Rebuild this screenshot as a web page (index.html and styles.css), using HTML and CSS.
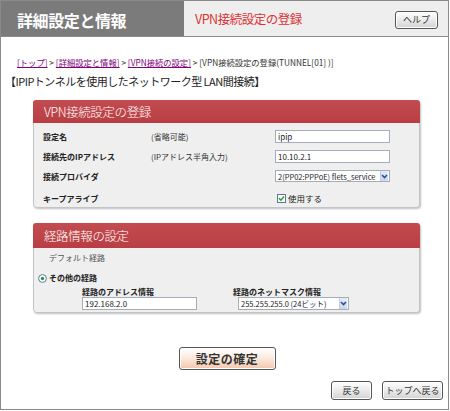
FILE: index.html
```html
<!DOCTYPE html>
<html lang="ja">
<head>
<meta charset="utf-8">
<title>VPN接続設定の登録</title>
<link rel="stylesheet" href="styles.css">
</head>
<body>
<div class="page">
  <header class="top">
    <div class="top-left">詳細設定と情報</div>
    <div class="top-right">
      <span class="page-title">VPN接続設定の登録</span>
      <span class="btn btn-help">ヘルプ</span>
    </div>
  </header>

  <nav class="crumbs">
    <a href="#">[トップ]</a> &gt; <a href="#">[詳細設定と情報]</a> &gt; <a href="#">[VPN接続の設定]</a> &gt; [VPN接続設定の登録(TUNNEL[01] )]
  </nav>

  <h1 class="heading">【IPIPトンネルを使用したネットワーク型 LAN間接続】</h1>

  <section class="panel panel-vpn">
    <div class="panel-head">VPN接続設定の登録</div>
    <div class="panel-body form-grid">
      <div class="lbl">設定名</div>
      <div class="note">(省略可能)</div>
      <div class="ctl"><span class="input w115">ipip</span></div>

      <div class="lbl">接続先のIPアドレス</div>
      <div class="note">(IPアドレス半角入力)</div>
      <div class="ctl"><span class="input w115">10.10.2.1</span></div>

      <div class="lbl">接続プロバイダ</div>
      <div class="note"></div>
      <div class="ctl"><span class="select w115"><span class="sel-text">2(PP02:PPPoE) flets_service</span><span class="sel-arrow"><svg width="7" height="9" viewBox="0 0 7 9"><path d="M1 3 L3.5 5.5 L6 3" fill="none" stroke="#2a4f9a" stroke-width="1.6"/></svg></span></span></div>

      <div class="lbl lbl-last">キープアライブ</div>
      <div class="note lbl-last"></div>
      <div class="ctl lbl-last"><span class="check"><svg width="9" height="9" viewBox="0 0 9 9"><rect x="0.5" y="0.5" width="8" height="8" fill="#fff" stroke="#5a7a9a"/><path d="M2 4.3 L3.8 6.2 L7 2.4" fill="none" stroke="#2e9a2e" stroke-width="1.5"/></svg></span>使用する</div>
    </div>
  </section>

  <section class="panel panel-route">
    <div class="panel-head">経路情報の設定</div>
    <div class="panel-body">
      <div class="default-route">デフォルト経路</div>
      <div class="other-route"><span class="radio"><svg width="9" height="9" viewBox="0 0 9 9"><circle cx="4.5" cy="4.5" r="3.9" fill="#fff" stroke="#5a7a9a"/><circle cx="4.5" cy="4.5" r="1.7" fill="#2e9a2e"/></svg></span>その他の経路</div>
      <div class="route-cols">
        <div class="route-col">
          <div class="lbl">経路のアドレス情報</div>
          <span class="input w115">192.168.2.0</span>
        </div>
        <div class="route-col col2">
          <div class="lbl">経路のネットマスク情報</div>
          <span class="select w111"><span class="sel-text">255.255.255.0 (24ビット)</span><span class="sel-arrow"><svg width="7" height="9" viewBox="0 0 7 9"><path d="M1 3 L3.5 5.5 L6 3" fill="none" stroke="#2a4f9a" stroke-width="1.6"/></svg></span></span>
        </div>
      </div>
    </div>
  </section>

  <div class="confirm-row">
    <span class="btn btn-confirm">設定の確定</span>
  </div>

  <div class="nav-row">
    <span class="btn btn-nav btn-back">戻る</span>
    <span class="btn btn-nav btn-top">トップへ戻る</span>
  </div>
</div>
</body>
</html>
```

FILE: styles.css
```css
* { box-sizing: border-box; }

html, body {
  margin: 0;
  padding: 0;
  background: #ffffff;
}

body {
  font-family: "Noto Sans CJK JP", "Noto Sans", "Liberation Sans", sans-serif;
  color: #222;
}

.page {
  width: 449px;
  height: 410px;
  border: 1px solid #8a8a8a;
  display: flex;
  flex-direction: column;
}

/* header */
.top {
  display: flex;
  height: 36px;
  border-bottom: 1px solid #8a8a8a;
}

.top-left {
  width: 183px;
  background: #7b7b7b;
  color: #fff;
  font-weight: bold;
  font-size: 16px;
  letter-spacing: -0.4px;
  padding-left: 16px;
  display: flex;
  align-items: center;
  padding-top: 2px;
}

.top-right {
  flex: 1;
  background: #eeeeee;
  display: flex;
  align-items: center;
  padding-left: 11px;
  padding-right: 10px;
}

.page-title {
  color: #dd3333;
  font-size: 12.5px;
  letter-spacing: -0.5px;
}

.btn {
  display: inline-flex;
  align-items: center;
  justify-content: center;
  border: 1px solid #555;
  border-radius: 3px;
  background: linear-gradient(#ffffff, #e6e6e6 60%, #d2d2d2);
  color: #333;
  box-shadow: inset 0 0 0 1px #fff;
}

.btn-help {
  margin-left: auto;
  width: 43px;
  height: 18px;
  font-size: 9px;
  margin-top: 2px;
}

/* breadcrumb */
.crumbs {
  margin-top: 19px;
  padding-left: 16px;
  font-size: 8.3px;
  line-height: 12px;
  color: #333;
  white-space: nowrap;
}

.crumbs a {
  color: #800080;
}

.heading {
  margin: 6px 0 0 0;
  padding-left: 4px;
  font-size: 11px;
  font-weight: normal;
  letter-spacing: -0.5px;
  line-height: 14px;
  color: #222;
}

/* panels */
.panel {
  margin-left: 32px;
  width: 387px;
  border-radius: 4px;
  background: #efefef;
  border: 1px solid #c4c4c4;
  box-shadow: 1px 1px 2px rgba(0, 0, 0, 0.25);
}

.panel-vpn {
  margin-top: 12px;
}

.panel-route {
  margin-top: 15px;
}

.panel-head {
  height: 23px;
  background: linear-gradient(#c24c50, #b93e43);
  color: #fff;
  font-size: 12.5px;
  font-weight: 300;
  letter-spacing: -0.4px;
  padding-left: 11px;
  display: flex;
  align-items: center;
  border-radius: 3px 3px 0 0;
  margin: -1px -1px 0 -1px;
}

.panel-route .panel-head {
  height: 25px;
}

.form-grid {
  display: grid;
  grid-template-columns: 108px 124px 1fr;
  grid-auto-rows: 20px;
  padding: 3px 0 1px 9px;
}

.lbl {
  font-size: 8px;
  font-weight: bold;
  color: #222;
  display: flex;
  align-items: center;
}

.note {
  font-size: 8px;
  color: #333;
  display: flex;
  align-items: center;
}

.ctl {
  display: flex;
  align-items: center;
  font-size: 8.5px;
  color: #222;
}

.form-grid .lbl-last {
  height: 22px;
  padding-top: 2px;
}

.input {
  display: inline-flex;
  align-items: center;
  height: 13px;
  border: 1px solid #a4adb8;
  background: #fff;
  font-size: 8px;
  padding-left: 2px;
  color: #222;
}

.w115 { width: 115px; }
.w111 { width: 111px; }

.select {
  display: inline-flex;
  align-items: center;
  height: 12px;
  border: 1px solid #a4adb8;
  background: #fff;
  font-size: 7.5px;
  color: #222;
  padding-left: 2px;
}

.route-col .select {
  height: 13px;
  margin-left: 5px;
}

.sel-text {
  flex: 1;
  white-space: nowrap;
  overflow: hidden;
}

.sel-arrow {
  width: 8px;
  height: 100%;
  background: linear-gradient(#e4ecf8, #c8d7ee);
  border-left: 1px solid #c0cde0;
  display: flex;
  align-items: center;
  justify-content: center;
  margin-right: 1px;
}

.check {
  display: inline-flex;
  margin-left: 2px;
  margin-right: 2px;
}

.panel-body {
  background: #efefef;
  border-radius: 0 0 4px 4px;
}

/* route panel */
.panel-route .panel-body {
  padding: 2px 0 2px 0;
}

.default-route {
  font-size: 8px;
  color: #555;
  line-height: 16px;
  padding-left: 15px;
}

.other-route {
  margin-top: 5px;
  font-size: 8px;
  font-weight: bold;
  line-height: 14px;
  padding-left: 4px;
  display: flex;
  align-items: center;
}

.radio {
  display: inline-flex;
  margin-right: 2px;
}

.route-cols {
  display: flex;
  padding-left: 48px;
  margin-top: 1px;
}

.route-col {
  display: flex;
  flex-direction: column;
  width: 151px;
}

.route-col .lbl {
  height: 10px;
  margin-bottom: 1px;
}

/* bottom */
.confirm-row {
  display: flex;
  justify-content: center;
  margin-top: 34px;
  padding-left: 5px;
}

.btn-confirm {
  width: 97px;
  height: 23px;
  font-size: 12px;
  font-weight: bold;
  letter-spacing: 0.5px;
  background: linear-gradient(#ffffff, #fbe8dc 50%, #f2c6ac);
  border-color: #555;
}

.nav-row {
  display: flex;
  justify-content: flex-end;
  gap: 10px;
  margin-top: 11px;
  padding-right: 5px;
}

.btn-nav {
  height: 19px;
  font-size: 9px;
}

.btn-back { width: 41px; }
.btn-top { width: 61px; }
```
